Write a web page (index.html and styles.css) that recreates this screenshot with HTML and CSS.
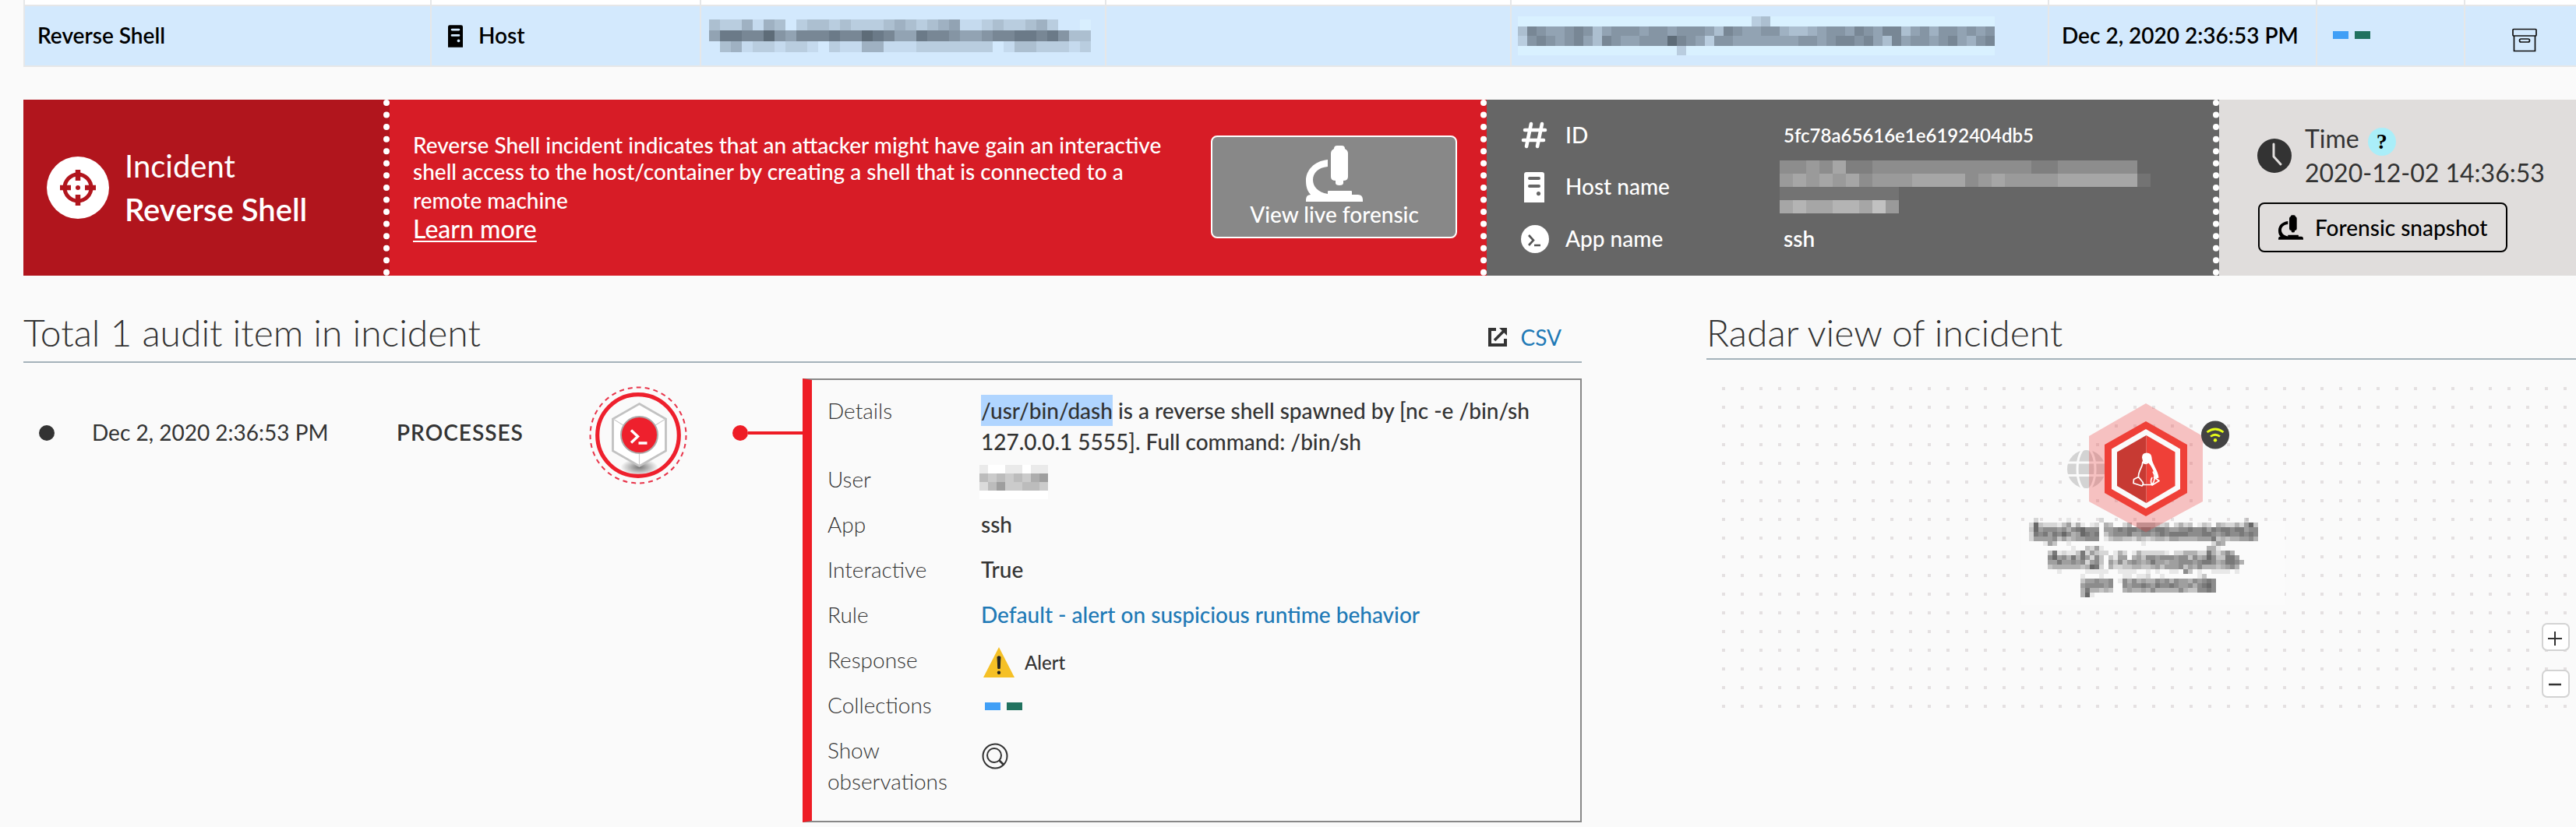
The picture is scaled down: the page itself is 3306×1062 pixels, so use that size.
FILE: index.html
```html
<!DOCTYPE html>
<html lang="en">
<head>
<meta charset="utf-8">
<title>Incident details</title>
<link rel="stylesheet" href="styles.css">
</head>
<body>
<svg width="0" height="0" class="defs">
  <defs>
    <symbol id="microscope" viewBox="0 0 73 72">
      <path d="M36 4q0-4 4-4h6q4 0 4 4q4 2 4 6v30q0 5-6 5v3q0 3-5 3t-5-3v-3q-6 0-6-5V10q0-4 4-6z"/>
      <path d="M28 18C10 20 0 32 0 45c0 8 2 14 7 19h21v-2C15 60 9 52 9 44c0-9 7-16 19-17z"/>
      <path d="M28 59q0-1 1-1h29q1 0 1 1v4h8q6 0 6 7v2H0v-2q0-7 6-7h22z"/>
    </symbol>
    <symbol id="server" viewBox="0 0 26 39">
      <path fill-rule="evenodd" d="M3 0h20q3 0 3 3v36H0V3q0-3 3-3zM7 6q-2 0-2 2t2 2h12q2 0 2-2t-2-2zM7 16q-2 0-2 2t2 2h12q2 0 2-2t-2-2zM18.500 25a2.600 2.600 0 1 0 .01 0z"/>
    </symbol>
  </defs>
</svg>

<div class="table">
  <div class="row row-prev"><div></div><div></div><div></div><div></div><div></div><div></div><div></div><div></div></div>
  <div class="row row-selected">
    <div class="cell">Reverse Shell</div>
    <div class="cell cell-host"><svg width="19" height="29"><use href="#server"/></svg>Host</div>
    <div class="cell cell-image"><svg class="mosaic" data-mosaic="image"></svg></div>
    <div class="cell"></div>
    <div class="cell cell-hostname"><svg class="mosaic" data-mosaic="hostname"></svg></div>
    <div class="cell">Dec 2, 2020 2:36:53 PM</div>
    <div class="cell cell-collections"><span class="chips"><i class="chip chip-blue"></i><i class="chip chip-green"></i></span></div>
    <div class="cell cell-archive">
      <svg width="32" height="31" viewBox="0 0 32 31" fill="none" stroke="#111" stroke-width="1.700"><rect x="1" y="1.500" width="30" height="8.500" rx="1"/><path d="M2.500 10v19.500h27V10"/><rect x="9.500" y="14" width="13" height="4" rx="2"/></svg>
    </div>
  </div>
</div>

<div class="banner">
  <div class="panel panel-name">
    <svg width="80" height="80" viewBox="0 0 80 80"><circle cx="40" cy="40" r="40" fill="#fff"/><circle cx="40" cy="40" r="17" fill="none" stroke="#b1151d" stroke-width="5"/><path d="M40 17v14M40 49v14M17 40h14M49 40h14" stroke="#b1151d" stroke-width="6.500"/><circle cx="40" cy="40" r="3" fill="#b1151d"/></svg>
    <div class="incident-name"><div>Incident</div><div class="strong">Reverse Shell</div></div>
  </div>
  <div class="panel panel-desc">
    <div class="desc">
      <div>Reverse Shell incident indicates that an attacker might have gain an interactive</div>
      <div>shell access to the host/container by creating a shell that is connected to a</div>
      <div class="last">remote machine</div>
      <a class="learn">Learn more</a>
    </div>
    <button class="live"><svg width="73" height="72"><use href="#microscope"/></svg><span>View live forensic</span></button>
  </div>
  <div class="panel panel-info">
    <svg width="34" height="35" viewBox="0 0 34 35" stroke="#fff" stroke-width="4.600" stroke-linecap="round"><path d="M13 3L7 32M27 3l-6 29M5 11h26M3 24h26"/></svg>
    <span>ID</span><span class="id-value">5fc78a65616e1e6192404db5</span>
    <svg class="icon-server" width="26" height="39" fill="#fff"><use href="#server"/></svg>
    <span class="up">Host name</span><svg class="mosaic host-mosaic" data-mosaic="host"></svg>
    <svg width="36" height="36" viewBox="0 0 36 36"><circle cx="18" cy="18" r="18" fill="#fff"/><path d="M10 13l6 6.500-6 6.500M17 26h8" fill="none" stroke="#555" stroke-width="2.600"/></svg>
    <span class="app">App name</span><span class="app value">ssh</span>
  </div>
  <div class="panel panel-time">
    <div class="time">
      <svg width="44" height="44" viewBox="0 0 44 44"><circle cx="22" cy="22" r="22" fill="#333"/><path d="M21 7v16l9 10" fill="none" stroke="#e0dddc" stroke-width="3" stroke-linecap="round" stroke-linejoin="round"/></svg>
      <div><div class="time-label">Time<span class="help">?</span></div><div>2020-12-02 14:36:53</div></div>
    </div>
    <button class="snapshot"><svg width="32" height="32"><use href="#microscope"/></svg>Forensic snapshot</button>
  </div>
</div>

<div class="columns">
  <section class="audit">
    <header class="section-head">
      <h2>Total 1 audit item in incident</h2>
      <a class="csv"><svg width="24" height="24" viewBox="0 0 24 24" fill="none" stroke="#333" stroke-width="4"><path d="M10 2H2v20h20v-8"/><path d="M8 16L20 4" stroke-width="3.500"/><path d="M14 0h10v10z" fill="#333" stroke="none"/></svg>CSV</a>
    </header>
    <div class="audit-body">
      <div class="event">
        <i class="dot"></i>
        <span class="date">Dec 2, 2020 2:36:53 PM</span>
        <span class="kind">PROCESSES</span>
        <svg class="process-icon" width="130" height="130" viewBox="0 0 130 130">
          <defs><radialGradient id="shade"><stop offset="0" stop-color="#777"/><stop offset="1" stop-color="#777" stop-opacity="0"/></radialGradient></defs>
          <circle cx="65" cy="65" r="61.500" fill="none" stroke="#e8344a" stroke-width="2" stroke-dasharray="6 5.040"/>
          <ellipse cx="66.500" cy="106" rx="24" ry="11" fill="url(#shade)"/>
          <circle cx="65" cy="65" r="52.300" fill="none" stroke="#ee202d" stroke-width="5.200"/>
          <path d="M66.500 24.500l34 19.500v41l-34 19.500-34-19.500V44z" fill="#fff" stroke="#c2c2c2" stroke-width="2.800"/>
          <path d="M66.500 65v39M66.500 65L33 44M66.500 65L100 44" stroke="#ccc" stroke-width="1.200"/>
          <circle cx="66.500" cy="64.500" r="23.500" fill="#ee202d" stroke="#aaa" stroke-width="2"/>
          <path d="M56 58.500l8.500 8-8.500 8M65.500 75h11" fill="none" stroke="#fff" stroke-width="3.400"/>
        </svg>
        <span class="connector"><i></i></span>
      </div>
      <dl class="card">
        <dt>Details</dt><dd><mark>/usr/bin/dash</mark> is a reverse shell spawned by [nc -e /bin/sh<br>127.0.0.1 5555]. Full command: /bin/sh</dd>
        <dt>User</dt><dd><svg class="mosaic user-mosaic" data-mosaic="user"></svg></dd>
        <dt>App</dt><dd>ssh</dd>
        <dt>Interactive</dt><dd>True</dd>
        <dt>Rule</dt><dd><a>Default - alert on suspicious runtime behavior</a></dd>
        <dt>Response</dt><dd class="alert"><svg width="40" height="39" viewBox="0 0 40 39"><path d="M20 0l20 39H0z" fill="#f5c026"/><path d="M18 12.500q2-1.500 4 0l-.8 15h-2.400z" fill="#222" stroke="#222"/><circle cx="20" cy="32.700" r="2.200" fill="#222"/></svg>Alert</dd>
        <dt>Collections</dt><dd class="card-chips"><span class="chips"><i class="chip chip-blue"></i><i class="chip chip-green"></i></span></dd>
        <dt>Show observations</dt><dd><svg class="observe" width="34" height="34" viewBox="0 0 34 34" fill="none" stroke="#333" stroke-width="2"><circle cx="17" cy="17" r="15.500"/><circle cx="16" cy="16" r="9"/><path d="M22.500 22.500l6 6" stroke-width="2.600"/></svg></dd>
      </dl>
    </div>
  </section>

  <section class="radar">
    <header class="section-head"><h2>Radar view of incident</h2></header>
    <div class="canvas">
      <svg width="1096" height="412">
        <defs><pattern id="dots" width="24" height="24" patternUnits="userSpaceOnUse"><rect width="4" height="4" fill="#e4e0e1"/></pattern></defs>
        <rect width="1096" height="412" fill="url(#dots)"/>
        <rect x="384" y="172" width="338" height="108" fill="#fbfbfb"/>
        <svg class="mosaic" data-mosaic="node" x="394" y="168"></svg>
        <g transform="translate(467.500 105.500)">
          <circle r="24.500" fill="#d3d3d3"/>
          <path d="M-25-8.500h50M-25 8h50" stroke="#fafafa" stroke-width="3"/>
          <ellipse rx="11.500" ry="27" fill="none" stroke="#fafafa" stroke-width="3"/>
        </g>
        <g transform="translate(544 103.500)">
          <path d="M0-82.500L73-40.500V43.500L0 83-73 43.500V-40.500z" fill="#ef3f3f" fill-opacity=".3"/>
          <path d="M0-59.500L53-29.500V32.500L0 62.500-53 32.500V-29.500z" fill="#ef4038"/>
          <path d="M0-49.500L44-24V27.500L0 52.500-44 27.500V-24z" fill="#fafafa"/>
          <path d="M.5-41.500L37.500-20V23.500L.5 45.500z" fill="#ef4038"/>
          <path d="M.5-41.500L-37-20V23.500L.5 45.500z" fill="#c73a33"/>
          <path d="M-5-13q0-6 6-6t6.500 6c0 8 8 16 9 26l-4 1c-1-8-5-15-9-20H-3.500z" fill="#fff"/>
          <path d="M-4-8C-4 0-10 4-9.500 12M9 5q5 8-1 17h-13M-9.500 12l-6 3-.5 5 11 3.500q3-3 0-6zM10 12l7 5-9 5.500q-3-5 0-10M-4-7q5 4 8-1" fill="none" stroke="#fff" stroke-width="1.700" stroke-linejoin="round"/>
        </g>
        <g transform="translate(633 61.500)">
          <circle r="18" fill="#434343"/>
          <g fill="none" stroke="#e5fb19" stroke-width="2.800"><path d="M-10.500-3.500q10.500-8 21 0M-6 2q6-4.500 12 0"/></g>
          <circle cy="6.700" r="2.200" fill="#e5fb19"/>
        </g>
      </svg>
      <div class="zoom">
        <button><svg width="18" height="18"><path d="M9 0v18M0 9h18" stroke="#333" stroke-width="2"/></svg></button>
        <button><svg width="18" height="18"><path d="M1 8h16" stroke="#333" stroke-width="2.500"/></svg></button>
      </div>
    </div>
  </section>
</div>
<script src="mosaic.js"></script>
</body>
</html>
```
FILE: styles.css
```css
* { box-sizing: border-box; }
body { margin: 0; height: 1062px; overflow: hidden; background: #fafafa; color: #333; font: 400 28px/34px Lato, "Noto Sans", sans-serif; }
svg { display: block; flex: none; }
i { display: block; }
.defs { position: absolute; }
button { font: inherit; margin: 0; }

.table { margin-left: 30px; }
.row { display: grid; grid-template-columns: 522px 346px 520px 520px 690px 344px 190px 142px; border-left: 2px solid #e6e7e8; }
.row > div { border-right: 2px solid #e6e7e8; }
.row > div:last-child { border-right: 0; }
.row-prev { height: 6px; background: #fff; }
.row-selected { height: 80px; background: #d3e9fd; border-top: 2px solid #e6e7e8; border-bottom: 2px solid #e6e7e8; color: #000; font-weight: 600; }
.cell { display: flex; align-items: center; padding: 0 0 2px 16px; }
.cell-host { padding-left: 21px; gap: 20px; }
.cell-host svg { margin-top: 2px; }
.cell-image { padding: 0 0 0 10px; }
.cell-hostname { padding: 0 0 0 8px; }
.cell-collections { padding-left: 20px; }
.cell-archive { padding: 10px 0 0 60px; }

.chips { display: flex; gap: 8px; }
.chip { width: 20px; height: 10px; }
.chip-blue { background: #409ff6; }
.chip-green { background: #21725f; }

.banner { display: flex; height: 226px; margin: 42px 0 0 30px; color: #fff; }
.panel { display: flex; align-items: center; border-right: 8px dotted #fff; }
.panel-name { width: 470px; padding-left: 30px; gap: 20px; background: #b1151d; font-size: 40px; line-height: 56px; }
.strong { font-weight: 600; }
.panel-desc { width: 1408px; padding: 0 30px 0 30px; justify-content: space-between; background: #d71c26; font-weight: 500; }
.desc .last { margin-top: 1px; line-height: 38px; }
.learn { display: block; margin-top: -1px; font-size: 32px; line-height: 38px; text-decoration: underline; text-decoration-thickness: 2px; text-underline-offset: 3px; text-decoration-skip-ink: none; }
.live { display: flex; flex-direction: column; align-items: center; width: 316px; height: 132px; margin-top: -2px; padding: 11px 0 0; border: 2px solid #fff; border-radius: 8px; background: #888; color: #fff; }
.live svg { fill: #fff; }
.live span { line-height: 32px; padding-left: 1px; }
.panel-info { display: grid; grid-template: 34px 68px 34px / 57px 280px 1fr; row-gap: 16px; align-items: center; align-content: center; width: 940px; padding: 0 0 2px 44px; background: #666; font-weight: 500; }
.icon-server { margin-left: 4px; }
.id-value { padding-top: 2px; font-size: 24px; font-weight: 600; }
.value { font-weight: 600; }
.up { margin-top: -3px; }
.app { margin-top: -2px; }
.host-mosaic { margin-left: -5px; }
.panel-time { flex: 1; flex-direction: column; align-items: flex-start; justify-content: center; gap: 16px; padding: 0 0 2px 49px; border: 0; background: #e0dddc; color: #333; font-size: 32px; line-height: 44px; }
.time { display: flex; align-items: center; gap: 17px; }
.time-label { display: flex; gap: 11px; }
.help { width: 36px; height: 36px; margin-top: 8px; border-radius: 50%; background: #aaeef9; color: #000; font: 700 28px/36px "Liberation Serif", serif; text-align: center; }
.snapshot { display: flex; align-items: center; gap: 15px; width: 320px; height: 64px; margin-left: 1px; padding: 0 0 0 24px; border: 2px solid #000; border-radius: 8px; background: none; color: #000; font-size: 28px; font-weight: 500; }

.columns { display: flex; gap: 160px; padding-left: 30px; }
.section-head { display: flex; align-items: center; justify-content: space-between; padding: 44px 0 8px; border-bottom: 2px solid #a4b2ba; }
h2 { margin: 0; font-size: 48px; font-weight: 300; line-height: 58px; }
a { color: #2079b6; }
.learn { color: #fff; }
.audit { width: 2000px; }
.csv { display: flex; align-items: center; gap: 18px; padding: 12px 26px 0 0; }
.audit-body { display: grid; grid-template-columns: 1000px 1000px; padding-top: 20px; }
.event { display: grid; grid-template-columns: 68px 391px 244px 130px 1fr; align-items: center; height: 140px; padding-left: 20px; }
.dot { width: 20px; height: 20px; border-radius: 50%; background: #333; }
.date, .kind { margin-top: -2px; }
.kind { font-weight: 600; letter-spacing: 1px; }
.process-icon { margin: 6px 0 0 1px; }
.connector { display: flex; align-items: center; margin-left: 57px; }
.connector::before { content: ""; width: 20px; height: 20px; border-radius: 50%; background: #ee1c25; }
.connector i { flex: 1; height: 4px; background: #ee1c25; }
.card { display: grid; grid-template-columns: 197px 1fr; row-gap: 8px; height: 570px; margin: 0; padding: 19px 18px 0 20px; align-content: start; border: 2px solid #888; border-left: 12px solid #ee1c25; line-height: 40px; }
dt { min-height: 50px; padding-right: 40px; font-weight: 300; }
dt:first-child { min-height: 80px; }
dd { margin: 0; font-weight: 500; }
mark { padding: 3px 0; background: #b0d5ff; color: inherit; }
.user-mosaic { margin: 2px 0 0 -2px; }
.alert { display: flex; gap: 13px; padding: 4px 0 0 3px; font-size: 24px; }
.card-chips { padding: 17px 0 0 5px; }
.observe { margin: 11px 0 0 1px; }

.radar { flex: 1; }
.radar .section-head { padding-bottom: 4px; }
.canvas { position: relative; margin: 35px 0 0 20px; height: 412px; }
.zoom { position: absolute; right: 8px; bottom: 13px; display: grid; gap: 24px; }
.zoom button { display: flex; align-items: center; justify-content: center; width: 36px; height: 36px; padding: 3px 2px 0 0; border: 2px solid #d3d3d3; border-radius: 7px; background: #fff; }
```
FILE: mosaic.js
```js
// Redacted values: each digit is the strength (0-9) of one block, "w" is a light block.
const mosaics = {
  image: { size: 14, height: 14, color: "#3a454f", light: "#d9effe", rows: [
    "3224143023323222343234511232234200w",
    "58877965777877987558776556778878633",
    "03412212210211441112222222013322212"] },
  hostname: { size: 12, height: 12.5, color: "#3a454f", light: "#d9f1ff", rows: [
    "wwwwwwwwwwwwwwwwwwwwwwwww23wwwwwwwwwwwwwwwwwwwwwwww",
    "376556763566656656665376556643345665765773564665656",
    "267656753765566697652665555555665677675375665675467",
    "wwwwwwwwwwwwwwwww2wwwwwwwwwwwwwwwwwwwwwwwwwwwwwwwww"] },
  host: { size: 17, height: 17, color: "#ffffff", light: "#606060", rows: [
    "334352233333333333322333333",
    "4545453444555534544445555551",
    "111111111",
    "565566574"] },
  user: { size: 11, height: 11, color: "#444444", light: "#ffffff", rows: [
    "1ww11w11", "43434356", "24633443", "wwwwwwww"] },
  node: { size: 6, height: 6, color: "#222222", light: "#ffffff", rows: [
    "0200000010000002000000000000000000000000000000200",
    "2832221351410120430024044443230242301320432242583",
    "3856665646786660556767767767765566766757677677566",
    "2767576864587670356667556656767777666776567667676",
    "2555563534556660134433243234435544445557343445564",
    "0001530010000000000000001000000000000002540000000",
    "0000000001003251000000000000000000000044100000000",
    "0000371211372532201420142222210224442274246400000",
    "0000685647475263031550453665666566364586337750000",
    "0000557556562563053635654575545566656776457764000",
    "0000344444434872042233443345355563546444345640000",
    "0000001000001111100111100101001106301001111010000",
    "0000000000010001000011011200100000001300000000000",
    "0000000000035565560164645446564655465676000000000",
    "0000000000056666560065667657667655646786000000000",
    "0000000000047443430045445464444464336676000000000",
    "0000000000048100000000000000000000000000000000000"] }
};
document.querySelectorAll("svg[data-mosaic]").forEach(svg => {
  const m = mosaics[svg.dataset.mosaic];
  svg.setAttribute("width", m.size * Math.max(...m.rows.map(r => r.length)));
  svg.setAttribute("height", m.height * m.rows.length);
  svg.setAttribute("shape-rendering", "crispEdges");
  m.rows.forEach((row, y) => [...row].forEach((d, x) => {
    if (d === "0") return;
    const r = document.createElementNS("http://www.w3.org/2000/svg", "rect");
    r.setAttribute("x", x * m.size);
    r.setAttribute("y", y * m.height);
    r.setAttribute("width", m.size);
    r.setAttribute("height", m.height);
    r.setAttribute("fill", d === "w" ? m.light : m.color);
    if (d !== "w") r.setAttribute("fill-opacity", d * 0.085);
    svg.appendChild(r);
  }));
});
```
